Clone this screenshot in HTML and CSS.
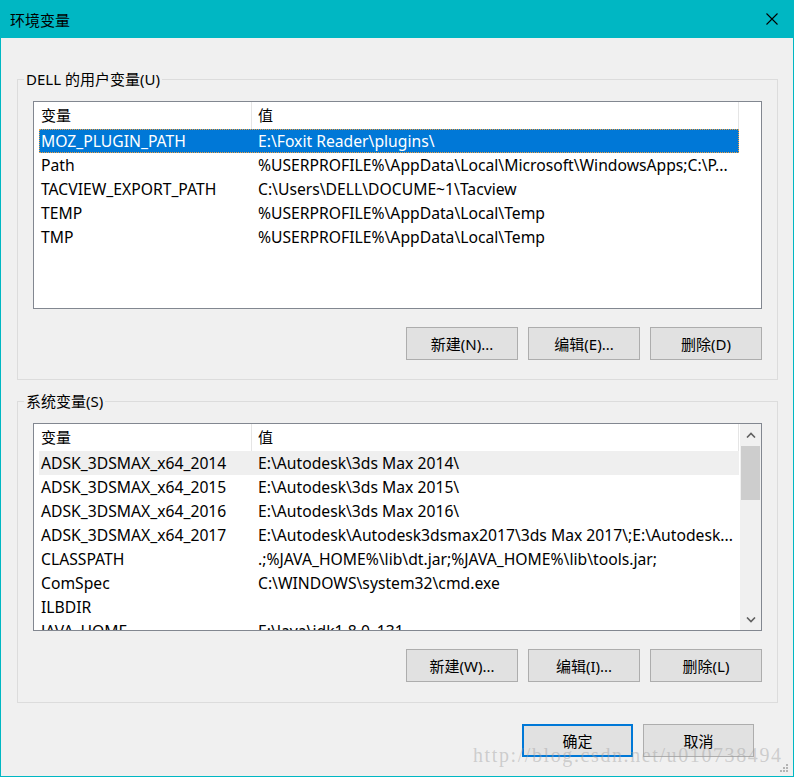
FILE: index.html
```html
<!DOCTYPE html>
<html lang="zh-CN">
<head>
    <meta charset="UTF-8">
    <title>环境变量</title>
    <link rel="stylesheet" href="styles.css">
</head>
<body>

    <div class="window">
        <!-- Title bar -->
        <div class="titlebar">
            <span class="title">环境变量</span>
            <svg class="close" width="12" height="12" viewBox="0 0 12 12">
                <path d="M0.5 0.5 L11.5 11.5 M11.5 0.5 L0.5 11.5" stroke="#000" stroke-width="1.1" fill="none"/>
            </svg>
        </div>

        <div class="content">
            <!-- User variables -->
            <fieldset class="group">
                <legend>DELL 的用户变量(U)</legend>
                <div class="listbox">
                    <div class="list-main">
                        <div class="list-header">
                            <div class="hcell name-col">变量</div>
                            <div class="hcell value-col">值</div>
                        </div>
                        <div class="row selected"><span>MOZ_PLUGIN_PATH</span><span>E:\Foxit Reader\plugins\</span></div>
                        <div class="row"><span>Path</span><span>%USERPROFILE%\AppData\Local\Microsoft\WindowsApps;C:\P...</span></div>
                        <div class="row"><span>TACVIEW_EXPORT_PATH</span><span>C:\Users\DELL\DOCUME~1\Tacview</span></div>
                        <div class="row"><span>TEMP</span><span>%USERPROFILE%\AppData\Local\Temp</span></div>
                        <div class="row"><span>TMP</span><span>%USERPROFILE%\AppData\Local\Temp</span></div>
                    </div>
                </div>
                <div class="buttons">
                    <button class="btn">新建(N)...</button>
                    <button class="btn">编辑(E)...</button>
                    <button class="btn">删除(D)</button>
                </div>
            </fieldset>

            <!-- System variables -->
            <fieldset class="group system">
                <legend>系统变量(S)</legend>
                <div class="listbox">
                    <div class="list-main">
                        <div class="list-header">
                            <div class="hcell name-col">变量</div>
                            <div class="hcell value-col">值</div>
                        </div>
                        <div class="row hover"><span>ADSK_3DSMAX_x64_2014</span><span>E:\Autodesk\3ds Max 2014\</span></div>
                        <div class="row"><span>ADSK_3DSMAX_x64_2015</span><span>E:\Autodesk\3ds Max 2015\</span></div>
                        <div class="row"><span>ADSK_3DSMAX_x64_2016</span><span>E:\Autodesk\3ds Max 2016\</span></div>
                        <div class="row"><span>ADSK_3DSMAX_x64_2017</span><span>E:\Autodesk\Autodesk3dsmax2017\3ds Max 2017\;E:\Autodesk...</span></div>
                        <div class="row"><span>CLASSPATH</span><span>.;%JAVA_HOME%\lib\dt.jar;%JAVA_HOME%\lib\tools.jar;</span></div>
                        <div class="row"><span>ComSpec</span><span>C:\WINDOWS\system32\cmd.exe</span></div>
                        <div class="row"><span>ILBDIR</span><span></span></div>
                        <div class="row"><span>JAVA_HOME</span><span>E:\Java\jdk1.8.0_131</span></div>
                    </div>
                    <div class="scrollbar">
                        <div class="arrow">
                            <svg width="10" height="6" viewBox="0 0 10 6"><path d="M1 5.5 L5 1.5 L9 5.5" stroke="#606060" stroke-width="1.6" fill="none"/></svg>
                        </div>
                        <div class="track"><div class="thumb"></div></div>
                        <div class="arrow">
                            <svg width="10" height="6" viewBox="0 0 10 6"><path d="M1 0.5 L5 4.5 L9 0.5" stroke="#606060" stroke-width="1.6" fill="none"/></svg>
                        </div>
                    </div>
                </div>
                <div class="buttons">
                    <button class="btn">新建(W)...</button>
                    <button class="btn">编辑(I)...</button>
                    <button class="btn">删除(L)</button>
                </div>
            </fieldset>

            <!-- OK / Cancel -->
            <div class="dialog-buttons">
                <button class="btn default">确定</button>
                <button class="btn">取消</button>
            </div>
        </div>

        <div class="watermark">http://blog.csdn.net/u010738494</div>
        <svg class="grip" width="9" height="9" viewBox="0 0 9 9" fill="#b4b4b4">
            <rect x="6" y="0" width="2" height="2"/>
            <rect x="3" y="3" width="2" height="2"/>
            <rect x="6" y="3" width="2" height="2"/>
            <rect x="0" y="6" width="2" height="2"/>
            <rect x="3" y="6" width="2" height="2"/>
            <rect x="6" y="6" width="2" height="2"/>
        </svg>
    </div>

</body>
</html>
```

FILE: styles.css
```css
/* Basic Styling */
body {
    margin: 0;
    font-family: "Noto Sans", "Noto Sans CJK SC", sans-serif;
    font-size: 15px;
    color: #000;
    background-color: #f0f0f0;
}

/* Dialog window */
.window {
    position: relative;
    width: 794px;
    height: 777px;
    box-sizing: border-box;
    border: 1px solid #00b7c3;
    background-color: #f0f0f0;
    overflow: hidden;
}

.titlebar {
    height: 37px;
    background-color: #00b7c3;
    display: flex;
    align-items: center;
    justify-content: space-between;
    padding: 0 15px 0 9px;
}

.title {
    font-size: 15px;
    line-height: 20px;
    margin-top: 1px;
}

.close {
    display: block;
    margin-bottom: 1px;
}

.content {
    padding: 0 15px 0 16px;
}

/* Group boxes */
.group {
    margin: 31px 0 0 0;
    padding: 12px 15px 19px 15px;
    border: 1px solid #dcdcdc;
    min-width: 0;
}

.group.system {
    margin-top: 11px;
    padding-bottom: 20px;
}

.group legend {
    margin-left: -9px;
    padding: 0 2px;
    line-height: 20px;
}

/* List view */
.listbox {
    height: 208px;
    box-sizing: border-box;
    border: 1px solid #828790;
    background-color: #fff;
    display: flex;
    overflow: hidden;
}

.list-main {
    width: 705px;
    flex: none;
}

.list-header {
    display: flex;
    height: 27px;
}

.hcell {
    line-height: 27px;
    border-right: 1px solid #e5e5e5;
    box-sizing: border-box;
}

.hcell.name-col {
    width: 218px;
    padding-left: 7px;
}

.hcell.value-col {
    width: 487px;
    padding-left: 6px;
}

.row {
    display: grid;
    grid-template-columns: 217px 1fr;
    height: 24px;
    line-height: 24px;
    margin-left: 5px;
    width: 700px;
    font-size: 15.7px;
    white-space: nowrap;
}

.row span {
    padding-left: 2px;
    overflow: hidden;
}

.row.selected {
    background-color: #0078d7;
    color: #fff;
    outline: 1px dotted #f0a040;
    outline-offset: -1px;
}

.row.hover {
    background-color: #efefef;
}

/* Scrollbar */
.scrollbar {
    width: 21px;
    margin-left: 1px;
    background-color: #f0f0f0;
    display: flex;
    flex-direction: column;
}

.arrow {
    height: 21px;
    display: flex;
    align-items: center;
    justify-content: center;
}

.track {
    flex: 1;
}

.thumb {
    height: 54px;
    margin: 1px 1px 0 1px;
    background-color: #cdcdcd;
}

/* Buttons */
.buttons {
    display: flex;
    justify-content: flex-end;
    gap: 10px;
    margin-top: 18px;
}

.btn {
    width: 112px;
    height: 33px;
    font-family: inherit;
    font-size: 15px;
    color: #000;
    background-color: #e1e1e1;
    border: 1px solid #adadad;
    padding: 0;
}

.dialog-buttons {
    display: flex;
    justify-content: flex-end;
    gap: 10px;
    margin-top: 21px;
    padding-right: 24px;
}

.dialog-buttons .btn {
    width: 111px;
}

.btn.default {
    border: 2px solid #0078d7;
}

/* Overlays */
.watermark {
    position: absolute;
    left: 472px;
    top: 743px;
    font-family: "Liberation Serif", serif;
    font-size: 20px;
    letter-spacing: 1.6px;
    color: rgba(160, 160, 160, 0.45);
    pointer-events: none;
}

.grip {
    position: absolute;
    right: 4px;
    bottom: 3px;
}
```
